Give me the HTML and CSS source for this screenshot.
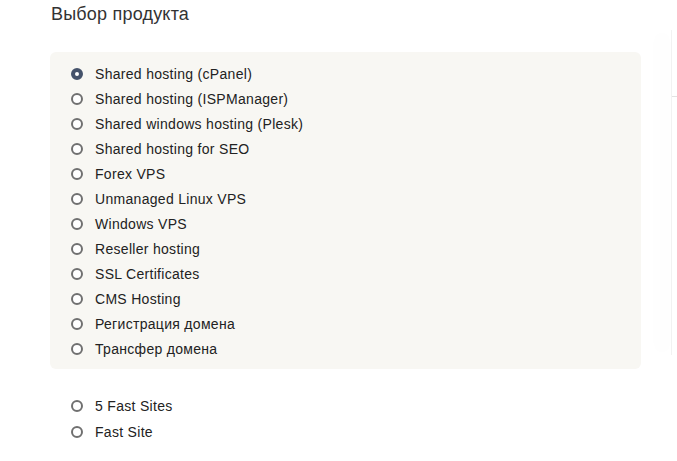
FILE: index.html
```html
<!DOCTYPE html>
<html lang="ru">
<head>
    <meta charset="UTF-8">
    <meta name="viewport" content="width=device-width, initial-scale=1.0">
    <title>Выбор продукта</title>
    <link rel="stylesheet" href="styles.css">
</head>
<body>
    <div class="page">
        <div class="order">
            <h2 class="title">Выбор продукта</h2>
            <div class="group">
                <label class="option"><input type="radio" name="product" checked><span>Shared hosting (cPanel)</span></label>
                <label class="option"><input type="radio" name="product"><span>Shared hosting (ISPManager)</span></label>
                <label class="option"><input type="radio" name="product"><span>Shared windows hosting (Plesk)</span></label>
                <label class="option"><input type="radio" name="product"><span>Shared hosting for SEO</span></label>
                <label class="option"><input type="radio" name="product"><span>Forex VPS</span></label>
                <label class="option"><input type="radio" name="product"><span>Unmanaged Linux VPS</span></label>
                <label class="option"><input type="radio" name="product"><span>Windows VPS</span></label>
                <label class="option"><input type="radio" name="product"><span>Reseller hosting</span></label>
                <label class="option"><input type="radio" name="product"><span>SSL Certificates</span></label>
                <label class="option"><input type="radio" name="product"><span>CMS Hosting</span></label>
                <label class="option"><input type="radio" name="product"><span>Регистрация домена</span></label>
                <label class="option"><input type="radio" name="product"><span>Трансфер домена</span></label>
            </div>
            <div class="group group_plain">
                <label class="option"><input type="radio" name="product"><span>5 Fast Sites</span></label>
                <label class="option"><input type="radio" name="product"><span>Fast Site</span></label>
            </div>
        </div>
        <div class="summary">
            <div class="summary_head"></div>
        </div>
    </div>
</body>
</html>
```

FILE: styles.css
```css
body {
    margin: 0;
    background-color: #fff;
    color: #333;
    font-family: "Liberation Sans", Arial, sans-serif;
    font-size: 14px;
}
.page {
    display: flex;
    align-items: flex-start;
}
.order {
    width: 591px;
    padding-left: 50px;
    flex-shrink: 0;
}
.title {
    margin: 4px 0 0 1px;
    height: 48px;
    font-size: 18px;
    font-weight: normal;
    line-height: 20px;
    letter-spacing: 0.2px;
    color: #333;
}
.group {
    padding: 9px 0 8px 21px;
    background-color: #f8f7f3;
    border-radius: 6px;
}
.group_plain {
    margin-top: 15px;
    background-color: transparent;
}
.group_plain .option {
    height: 26px;
}
.option {
    display: flex;
    align-items: center;
    height: 25px;
    cursor: pointer;
}
.option span {
    line-height: 16px;
    color: #222;
    letter-spacing: 0.3px;
}
.option input {
    appearance: none;
    -webkit-appearance: none;
    width: 12px;
    height: 12px;
    margin: 0 12px 0 0;
    border: 2px solid #707070;
    border-radius: 50%;
    background-color: #fff;
    box-sizing: border-box;
    flex-shrink: 0;
}
.option input:checked {
    border: 4px solid #45526a;
    background-color: #fff;
}
.summary {
    margin: 30px 0 0 30px;
    flex: 1;
    height: 325px;
    border-left: 1px solid #f2f2f2;
    box-shadow: -12px 0 18px rgba(0, 0, 0, 0.025);
}
.summary_head {
    height: 66px;
    border-bottom: 1px solid #e2e2e2;
}
```
